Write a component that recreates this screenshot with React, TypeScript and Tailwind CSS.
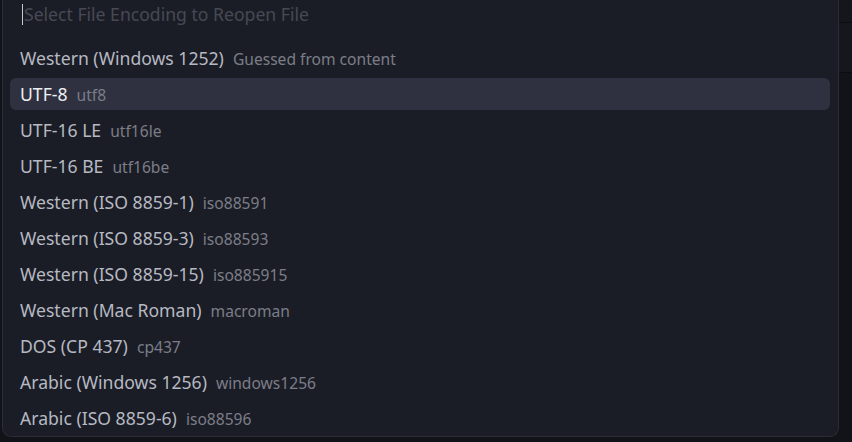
const encodings = [
  { label: 'Western (Windows 1252)', desc: 'Guessed from content' },
  { label: 'UTF-8', desc: 'utf8' },
  { label: 'UTF-16 LE', desc: 'utf16le' },
  { label: 'UTF-16 BE', desc: 'utf16be' },
  { label: 'Western (ISO 8859-1)', desc: 'iso88591' },
  { label: 'Western (ISO 8859-3)', desc: 'iso88593' },
  { label: 'Western (ISO 8859-15)', desc: 'iso885915' },
  { label: 'Western (Mac Roman)', desc: 'macroman' },
  { label: 'DOS (CP 437)', desc: 'cp437' },
  { label: 'Arabic (Windows 1256)', desc: 'windows1256' },
  { label: 'Arabic (ISO 8859-6)', desc: 'iso88596' },
];

export default function App() {
  const selected = 1;

  return (
    <div className="w-[852px] h-[442px] flex bg-[#121319] overflow-hidden font-['Noto_Sans',sans-serif]">
      <div className="ml-[2px] w-[837px] h-[437px] flex flex-col bg-[#1b1d26] border border-t-0 border-[#2a2c37] rounded-b-[9px]">
        {/* input */}
        <div className="h-[40px] flex items-start pt-[4px] pl-[19px]">
          <span className="w-px h-[21px] bg-[#c8cad0]" />
          <span className="ml-px text-[17.6px] leading-[21px] text-[#464955]">Select File Encoding to Reopen File</span>
        </div>

        {/* list */}
        <div className="flex flex-col pl-[7px] pr-[8px]">
          {encodings.map((e, i) => (
            <div key={e.label} className="h-[36px] py-[2px]">
              <div
                className={`h-full flex items-center px-[10px] rounded-[6px] ${
                  i === selected ? 'bg-[#2f3140]' : ''
                }`}
              >
                <div className="flex items-baseline gap-[9px] leading-[24px] pt-px">
                  <span className={`text-[17.6px] ${i === selected ? 'text-[#eceef2]' : 'text-[#b6b9c2]'}`}>{e.label}</span>
                  <span className="text-[15.6px] text-[#7b7e88]">{e.desc}</span>
                </div>
              </div>
            </div>
          ))}
        </div>
      </div>

      <div className="flex-1 flex flex-col">
        <div className="h-[23px] border-b border-[#0c0d11] bg-[#15161c]" />
        <div className="h-[50px] border-b border-[#0c0d11] bg-[#16171e]" />
        <div className="flex-1 bg-[#121319]" />
      </div>
    </div>
  );
}
